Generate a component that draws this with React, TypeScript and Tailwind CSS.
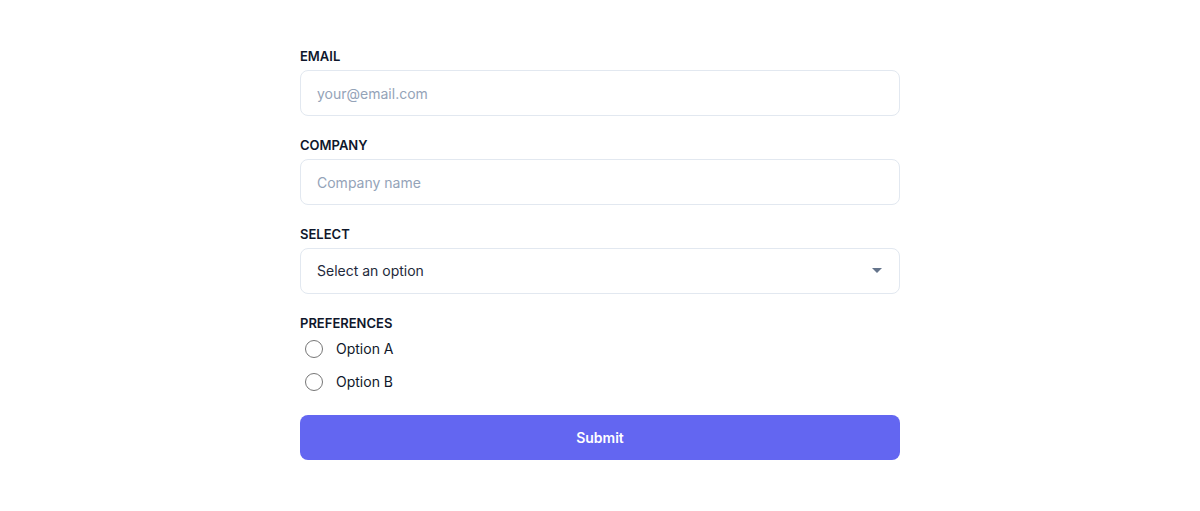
import { useState } from 'react';

export default function App() {
  const [pref, setPref] = useState('');

  return (
    <div className="min-h-screen bg-white flex justify-center font-['Inter',sans-serif]">
      <form className="w-[600px] pt-12 flex flex-col" onSubmit={(e) => e.preventDefault()}>
        <label className="text-[13px] leading-4 font-semibold text-slate-900 uppercase mb-1.5">Email</label>
        <input
          type="email"
          placeholder="your@email.com"
          className="h-[46px] px-4 rounded-lg border border-[#e2e8f0] text-sm text-slate-800 placeholder:text-[#94a3b8] outline-none"
        />

        <label className="mt-[21px] text-[13px] leading-4 font-semibold text-slate-900 uppercase mb-1.5">Company</label>
        <input
          type="text"
          placeholder="Company name"
          className="h-[46px] px-4 rounded-lg border border-[#e2e8f0] text-sm text-slate-800 placeholder:text-[#94a3b8] outline-none"
        />

        <label className="mt-[21px] text-[13px] leading-4 font-semibold text-slate-900 uppercase mb-1.5">Select</label>
        <div className="relative">
          <select className="w-full h-[46px] px-4 rounded-lg border border-[#e2e8f0] text-sm text-[#1e293b] bg-white appearance-none outline-none">
            <option>Select an option</option>
            <option>Option 1</option>
            <option>Option 2</option>
          </select>
          <svg className="absolute right-[18px] top-[20px] pointer-events-none" width="10" height="5" viewBox="0 0 10 5">
            <path d="M0 0h10L5 5z" fill="#64748b" />
          </svg>
        </div>

        <label className="mt-[21px] text-[13px] leading-4 font-semibold text-slate-900 uppercase">Preferences</label>
        <div className="flex flex-col pt-px">
          {['Option A', 'Option B'].map((o) => (
            <label key={o} className="h-[33px] flex items-center gap-[13px] cursor-pointer">
              <input
                type="radio"
                name="pref"
                checked={pref === o}
                onChange={() => setPref(o)}
                className="w-[18px] h-[18px] m-0 ml-[5px] accent-[#6366f1]"
              />
              <span className="text-sm text-slate-900">{o}</span>
            </label>
          ))}
        </div>

        <button
          type="submit"
          className="mt-[17px] h-[45px] rounded-lg bg-[#6366f1] text-white text-sm font-semibold"
        >
          Submit
        </button>
      </form>
    </div>
  );
}
